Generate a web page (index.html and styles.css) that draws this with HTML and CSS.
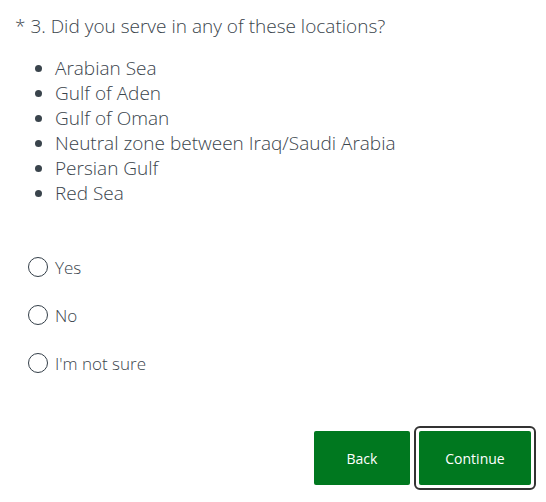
FILE: index.html
```html
<!DOCTYPE html>
<html>
<head>
<meta charset="utf-8">
<link rel="stylesheet" href="styles.css">
</head>
<body>
<div class="page">
  <div class="question">
    <h2 class="title">* 3. Did you serve in any of these locations?</h2>
    <ul class="locations">
      <li>Arabian Sea</li>
      <li>Gulf of Aden</li>
      <li>Gulf of Oman</li>
      <li>Neutral zone between Iraq/Saudi Arabia</li>
      <li>Persian Gulf</li>
      <li>Red Sea</li>
    </ul>
    <div class="options">
      <label class="option"><span class="radio"></span><span class="label">Yes</span></label>
      <label class="option"><span class="radio"></span><span class="label">No</span></label>
      <label class="option"><span class="radio"></span><span class="label">I'm not sure</span></label>
    </div>
  </div>
  <div class="actions">
    <button class="btn">Back</button>
    <span class="focus"><button class="btn btn-continue">Continue</button></span>
  </div>
</div>
</body>
</html>
```
FILE: styles.css
```css
html, body {
  margin: 0;
  padding: 0;
  background: #fff;
}
body {
  font-family: "Open Sans", "Liberation Sans", sans-serif;
  color: #3a444c;
  width: 546px;
  height: 502px;
  overflow: hidden;
}
.page {
  padding: 14px 10px 0 15px;
}
.title {
  margin: 0;
  font-size: 19px;
  font-weight: 300;
  line-height: 25px;
}
.locations {
  margin: 17px 0 0 0;
  padding: 0 0 0 40px;
  font-size: 19px;
  font-weight: 300;
  line-height: 25px;
}
.options {
  margin-top: 51px;
  display: flex;
  flex-direction: column;
  gap: 28px;
  padding-left: 13px;
}
.option {
  display: flex;
  align-items: center;
  gap: 7px;
  font-size: 17px;
  font-weight: 300;
  height: 20px;
}
.radio {
  width: 18px;
  height: 18px;
  border: 1px solid #333e48;
  border-radius: 50%;
  box-sizing: content-box;
}
.actions {
  display: flex;
  justify-content: flex-end;
  align-items: center;
  gap: 4px;
  margin-top: 53px;
}
.btn {
  font-family: "Open Sans", "Liberation Sans", sans-serif;
  font-size: 14px;
  color: #fff;
  background: #00781f;
  border: none;
  border-radius: 2px;
  height: 54px;
  width: 96px;
  padding: 0;
}
.btn-continue {
  width: 112px;
  display: block;
}
.focus {
  display: block;
  padding: 3px;
  border: 2px solid #333;
  border-radius: 6px;
}
```
